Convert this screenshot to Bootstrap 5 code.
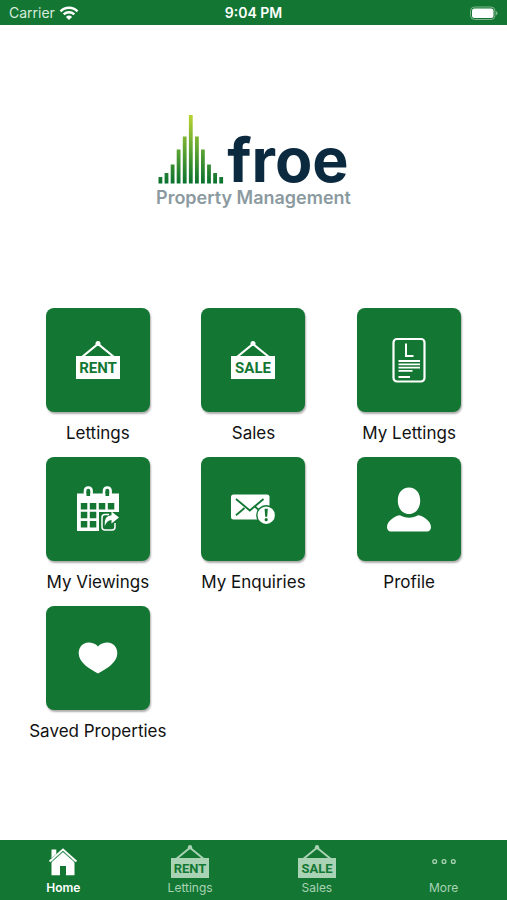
<!DOCTYPE html>
<html lang="en">
<head>
<meta charset="utf-8">
<meta name="viewport" content="width=device-width, initial-scale=1">
<title>Afroe Property Management</title>
<link href="https://cdn.jsdelivr.net/npm/bootstrap@5.3.0/dist/css/bootstrap.min.css" rel="stylesheet">
<style>
:root { --brand: #137733; }
body { font-family: Inter, "Liberation Sans", sans-serif; color: #111; background: #fff; }
.brand-bg { background: var(--brand); }
.status-bar { height: 25px; font-size: 14px; line-height: 26px; color: #fff; padding: 0 9px; }
.carrier { color: #d8eadd; }
.logo { padding-top: 90px; padding-bottom: 99px; }
.logo-row { height: 72px; gap: 3px; }
.logo-name { font-size: 61px; line-height: 90px; font-weight: 700; color: #0b2a40; }
.logo-tag { font-size: 18px; line-height: 22px; font-weight: 600; color: #8b9a9f; }
.tiles { padding: 0 20px; row-gap: 16px; }
.tile { color: #111; font-size: 17px; line-height: 20px; gap: 11px; }
.tile-face { width: 104px; height: 104px; border-radius: 8px; box-shadow: 1px 2px 2px rgba(0,0,0,.32); }
.tile-label { height: 18px; }
.tab-bar { height: 60px; }
.tab-item { color: #a9d3b4; font-size: 12px; line-height: 14px; padding-top: 4px; gap: 2px; }
.tab-item.current { color: #fff; font-weight: 600; }
svg text { font-family: Roboto, "Liberation Sans", sans-serif; font-weight: 700; }
</style>
<script src="https://cdn.jsdelivr.net/npm/bootstrap@5.3.0/dist/js/bootstrap.bundle.min.js"></script>
</head>
<body>
<svg class="d-none" aria-hidden="true">
  <symbol id="sign" viewBox="0 0 44 40">
    <path d="M6 17 22 4 38 17" fill="none" stroke="currentColor" stroke-width="2.200"/>
    <circle cx="22" cy="3.500" r="2.500" fill="currentColor"/>
    <path d="M0 16h44v23H0z" fill="currentColor"/>
  </symbol>
</svg>
<div class="d-flex flex-column min-vh-100">
  <header class="status-bar brand-bg row g-0">
    <div class="col carrier d-flex align-items-center gap-1"><span>Carrier</span>
      <svg width="20" height="16" viewBox="0 0 20 16" fill="none" stroke="#fff" stroke-width="2.400" role="img" aria-label="Wi-Fi"><path d="M1.500 6.300a12 12 0 0 1 17 0M4.700 9.400a7.600 7.600 0 0 1 10.600 0"/><path d="M10 15 6.900 11.900a4.400 4.400 0 0 1 6.200 0z" fill="#fff" stroke="none"/></svg>
    </div>
    <div class="col text-center fw-semibold">9:04 PM</div>
    <div class="col d-flex justify-content-end align-items-center">
      <svg width="28" height="15" viewBox="0 0 28 15" role="img" aria-label="Battery full"><rect x=".5" y="1" width="24.500" height="12.500" rx="4" fill="none" stroke="#7fb58e"/><rect x="2" y="2.500" width="21.500" height="9.500" rx="2.500" fill="#fff"/><path d="M26 5q3 2.200 0 4.500z" fill="#7fb58e"/></svg>
    </div>
  </header>

  <main class="flex-grow-1">
    <div class="logo d-flex flex-column align-items-center">
      <div class="logo-row d-flex align-items-start">
        <svg width="66" height="69" viewBox="0 0 66 69" role="img" aria-label="A">
          <defs><linearGradient id="leaf" gradientUnits="userSpaceOnUse" x1="0" y1="0" x2="0" y2="69"><stop offset="0" stop-color="#b9d330"/><stop offset=".5" stop-color="#5fa532"/><stop offset="1" stop-color="#07702f"/></linearGradient></defs>
          <path fill="url(#leaf)" d="M.5 62h3.800v6.500H.5zM6.600 58h3.800v10.500H6.600zM12.700 49.500h3.800v19h-3.800zM18.700 34.500h3.800v34h-3.800zM24.800 21.500h3.800v47h-3.800zM30.900 0h3.800v68.500h-3.800zM37 21.500h3.800v47H37zM43 34.500h3.800v34H43zM49.100 49.500h3.800v19h-3.800zM55.200 58H59v10.500h-3.800zM61.300 62h3.800v6.500h-3.800z"/>
        </svg>
        <span class="logo-name">froe</span>
      </div>
      <div class="logo-tag">Property Management</div>
    </div>

    <nav class="tiles row g-0" aria-label="Services">
      <a href="#" class="tile col-4 d-flex flex-column align-items-center text-decoration-none">
        <span class="tile-face brand-bg text-white d-flex align-items-center justify-content-center">
          <svg width="44" height="40" viewBox="0 0 44 40"><use href="#sign"/><text x="22" y="33" text-anchor="middle" font-size="15" fill="#137733">RENT</text></svg>
        </span><span class="tile-label text-nowrap">Lettings</span></a>
      <a href="#" class="tile col-4 d-flex flex-column align-items-center text-decoration-none">
        <span class="tile-face brand-bg text-white d-flex align-items-center justify-content-center">
          <svg width="44" height="40" viewBox="0 0 44 40"><use href="#sign"/><text x="22" y="33" text-anchor="middle" font-size="15" fill="#137733">SALE</text></svg>
        </span><span class="tile-label text-nowrap">Sales</span></a>
      <a href="#" class="tile col-4 d-flex flex-column align-items-center text-decoration-none">
        <span class="tile-face brand-bg text-white d-flex align-items-center justify-content-center">
          <svg width="34" height="46" viewBox="0 0 34 46" fill="none" stroke="#fff"><rect x="1.500" y="2" width="31" height="42.500" rx="3.500" stroke-width="2.200"/><path d="M14 6.500V19h7.500" stroke-width="2"/><path d="M6.500 24h21.500M6.500 27.300h21.500M6.500 30.600h21.500M6.500 33.900h14M6.500 40h11.500" stroke-width="1.800"/></svg>
        </span><span class="tile-label text-nowrap">My Lettings</span></a>
      <a href="#" class="tile col-4 d-flex flex-column align-items-center text-decoration-none">
        <span class="tile-face brand-bg text-white d-flex align-items-center justify-content-center">
          <svg width="42" height="46" viewBox="0 0 42 46"><path fill="#fff" fill-rule="evenodd" d="M0 7.500h42V26H22v19H0zM3.800 17v6.500h6.500V17zm9 0v6.500h6.500V17zm9 0v6.500h6.500V17zm9 0v6.500h6.500V17zM3.800 25.800v6.500h6.500v-6.500zm9 0v6.500h6.500v-6.500zM3.800 35v6.500h6.500V35zm9 0v6.500h6.500V35z"/><path d="M8 10V5q0-3.500 3.300-3.500T14.600 5v5M27 10V5q0-3.500 3.300-3.500T33.600 5v5" fill="none" stroke="#fff" stroke-width="2.600"/><path d="M9.500 6.500h3.600V10H9.500zM28.500 6.500h3.600V10h-3.600z" fill="#137733"/><path d="M32 28.500h-4q-3 0-3 3V41q0 3 3 3h7q3 0 3-3v-4" fill="none" stroke="#fff" stroke-width="1.500"/><path d="M34.500 25.500 42 31.500l-7.500 6V34q-4.500 0-6.800 6-1-10.500 6.800-10.700z" fill="#fff"/></svg>
        </span><span class="tile-label text-nowrap">My Viewings</span></a>
      <a href="#" class="tile col-4 d-flex flex-column align-items-center text-decoration-none">
        <span class="tile-face brand-bg text-white d-flex align-items-center justify-content-center">
          <svg width="44" height="32" viewBox="0 0 44 32"><rect y="1.500" width="38.500" height="25" rx="2.500" fill="#fff"/><path d="m5 6 13.800 11.500L32.500 6M5 22.300l8.500-7.300M24 13.700l3.600 3" fill="none" stroke="#137733" stroke-width="1.800"/><circle cx="35.200" cy="22.200" r="9.400" fill="#fff" stroke="#137733" stroke-width="1.400"/><path d="M33.600 15.700h3.200l-.6 8h-2z" fill="#137733"/><circle cx="35.200" cy="26.700" r="1.600" fill="#137733"/></svg>
        </span><span class="tile-label text-nowrap">My Enquiries</span></a>
      <a href="#" class="tile col-4 d-flex flex-column align-items-center text-decoration-none">
        <span class="tile-face brand-bg text-white d-flex align-items-center justify-content-center">
          <svg width="46" height="46" viewBox="0 0 46 46" fill="#fff"><path d="M23 1.500c7 0 11.200 5.500 11.200 13S30 28 23 28s-11.200-6-11.200-13.500S16 1.500 23 1.500zM14 29.200c5 3.300 13 3.300 18 0 4.500.3 13 5.500 13 11.800 0 2.500-1.500 4.500-4 4.500H5c-2.500 0-4-2-4-4.500 0-6.300 8.500-11.500 13-11.800z"/></svg>
        </span><span class="tile-label text-nowrap">Profile</span></a>
      <a href="#" class="tile col-4 d-flex flex-column align-items-center text-decoration-none">
        <span class="tile-face brand-bg text-white d-flex align-items-center justify-content-center">
          <svg width="40" height="32" viewBox="0 0 40 32" fill="#fff"><path d="M20 4.500C22.500 1.500 26 .5 29.500.5c6 0 10 5 9.800 11C39 21 28 27 20 31.500 12 27 1 21 .7 11.500.5 5.500 4.500.5 10.500.5 14 .5 17.500 1.500 20 4.500z"/></svg>
        </span><span class="tile-label text-nowrap">Saved Properties</span></a>
    </nav>
  </main>

  <nav class="tab-bar brand-bg row g-0" aria-label="Main">
    <a href="#" class="tab-item current col d-flex flex-column align-items-center text-decoration-none" aria-current="page">
      <svg width="38" height="35" viewBox="0 0 38 35"><path d="M19 7.500 30.500 17v14.300H22V22h-6v9.300H7.500V17z" fill="#fff"/><path d="M5.500 17.500 19 5.500l13.500 12" fill="none" stroke="#fff" stroke-width="1.700"/><path d="M7.500 5.500h4.800v4.500l-4.800 4.200z" fill="#fff"/><path d="M6.500 18.800 19 7.700l12.500 11.100" fill="none" stroke="#137733" stroke-width=".8"/></svg>
      <span>Home</span></a>
    <a href="#" class="tab-item col d-flex flex-column align-items-center text-decoration-none">
      <svg width="38" height="35" viewBox="0 0 44 40"><use href="#sign"/><text x="22" y="33" text-anchor="middle" font-size="15" fill="#137733">RENT</text></svg>
      <span>Lettings</span></a>
    <a href="#" class="tab-item col d-flex flex-column align-items-center text-decoration-none">
      <svg width="38" height="35" viewBox="0 0 44 40"><use href="#sign"/><text x="22" y="33" text-anchor="middle" font-size="15" fill="#137733">SALE</text></svg>
      <span>Sales</span></a>
    <a href="#" class="tab-item col d-flex flex-column align-items-center text-decoration-none">
      <svg width="38" height="35" viewBox="0 0 38 35" fill="none" stroke="currentColor" stroke-width="1.300"><circle cx="9.700" cy="17.500" r="1.900"/><circle cx="19" cy="17.500" r="1.900"/><circle cx="28.300" cy="17.500" r="1.900"/></svg>
      <span>More</span></a>
  </nav>
</div>
</body>
</html>
